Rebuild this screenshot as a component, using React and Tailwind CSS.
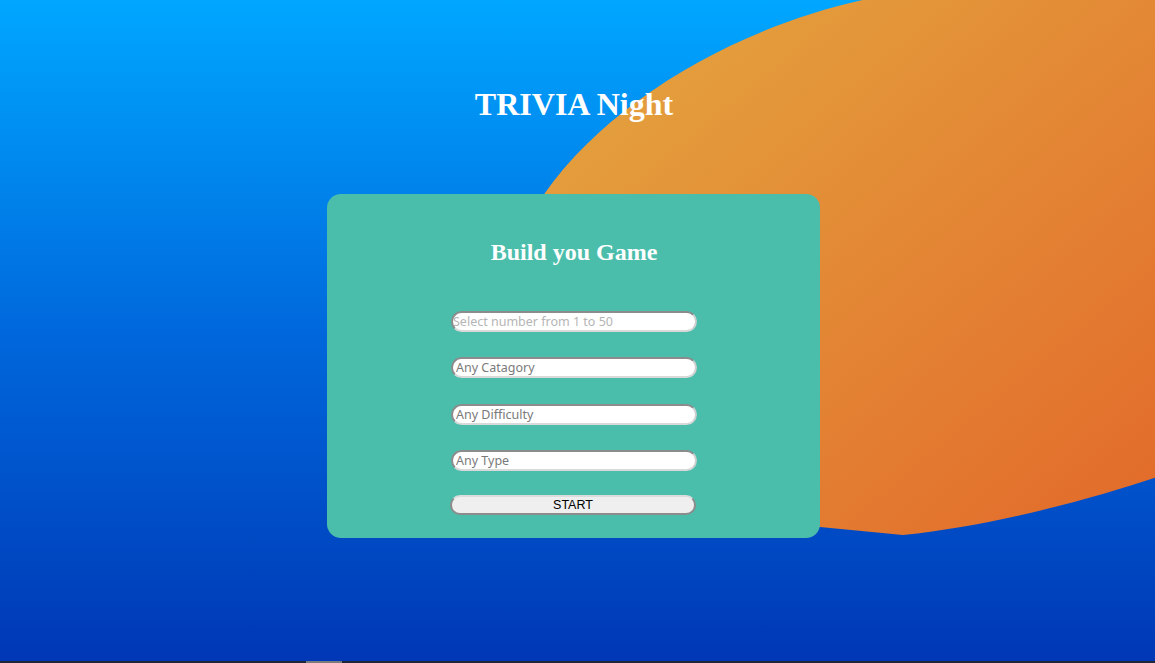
import React from "react";

const fieldBase =
  "w-[246px] h-[21px] rounded-full bg-white border-2 border-t-[#8c8c8c] border-l-[#8c8c8c] border-b-[#d9d9d9] border-r-[#cfcfcf] outline-none text-[12.5px] leading-none font-['Noto_Sans',sans-serif]";

export default function App() {
  return (
    <div className="w-[1155px] h-[663px] flex flex-col overflow-hidden">
      <div className="relative h-[661px] w-full bg-gradient-to-b from-[#00a7ff] via-[#0068dc] to-[#0037b6] overflow-hidden">
        <svg
          className="absolute inset-0"
          width="1155"
          height="661"
          viewBox="0 0 1155 661"
        >
          <defs>
            <linearGradient id="blob" x1="0" y1="0" x2="1" y2="1">
              <stop offset="0" stopColor="#e4a940" />
              <stop offset="1" stopColor="#e2692a" />
            </linearGradient>
          </defs>
          <path
            d="M 872 -2 C 740 25, 610 100, 545 193 C 470 300, 560 520, 820 527 L 903 535 C 1000 525, 1100 496, 1160 476 L 1160 -2 Z"
            fill="url(#blob)"
          />
        </svg>
        <div className="relative w-[1148px] flex flex-col items-center">
          <h1 className="mt-[86px] text-[32px] leading-[37px] font-bold text-white font-['Liberation_Serif',serif]">
            TRIVIA Night
          </h1>
          <div className="mt-[71px] -translate-x-[1px] w-[493px] h-[344px] rounded-[14px] bg-[#4bbdab] flex flex-col items-center pt-[44px]">
            <h2 className="translate-x-[1px] text-[24px] leading-[28px] font-bold text-white font-['Liberation_Serif',serif]">
              Build you Game
            </h2>
            <div className="mt-[45px] translate-x-[1px] flex flex-col items-center">
              <input
                className={`${fieldBase} pl-0 placeholder:text-[#b5b5b5]`}
                placeholder="Select number from 1 to 50"
              />
              <input
                className={`${fieldBase} mt-[25px] pl-[3px] placeholder:text-[#7a7a7a]`}
                placeholder="Any Catagory"
              />
              <input
                className={`${fieldBase} mt-[26px] pl-[3px] placeholder:text-[#7a7a7a]`}
                placeholder="Any Difficulty"
              />
              <input
                className={`${fieldBase} mt-[25px] pl-[3px] placeholder:text-[#7a7a7a]`}
                placeholder="Any Type"
              />
              <button className="mt-[24px] w-[246px] h-[20px] rounded-full bg-[#efefef] border-2 border-t-[#dcdcdc] border-l-[#8c8c8c] border-b-[#8c8c8c] border-r-[#8c8c8c] text-[12.5px] leading-none text-black font-['Liberation_Sans',sans-serif] flex items-center justify-center -translate-x-[1px]">
                START
              </button>
            </div>
          </div>
        </div>
      </div>
      <div className="h-[2px] w-full bg-[#1e2838] flex">
        <div className="ml-[306px] w-[36px] h-full bg-[#7a7a7a]" />
      </div>
    </div>
  );
}
